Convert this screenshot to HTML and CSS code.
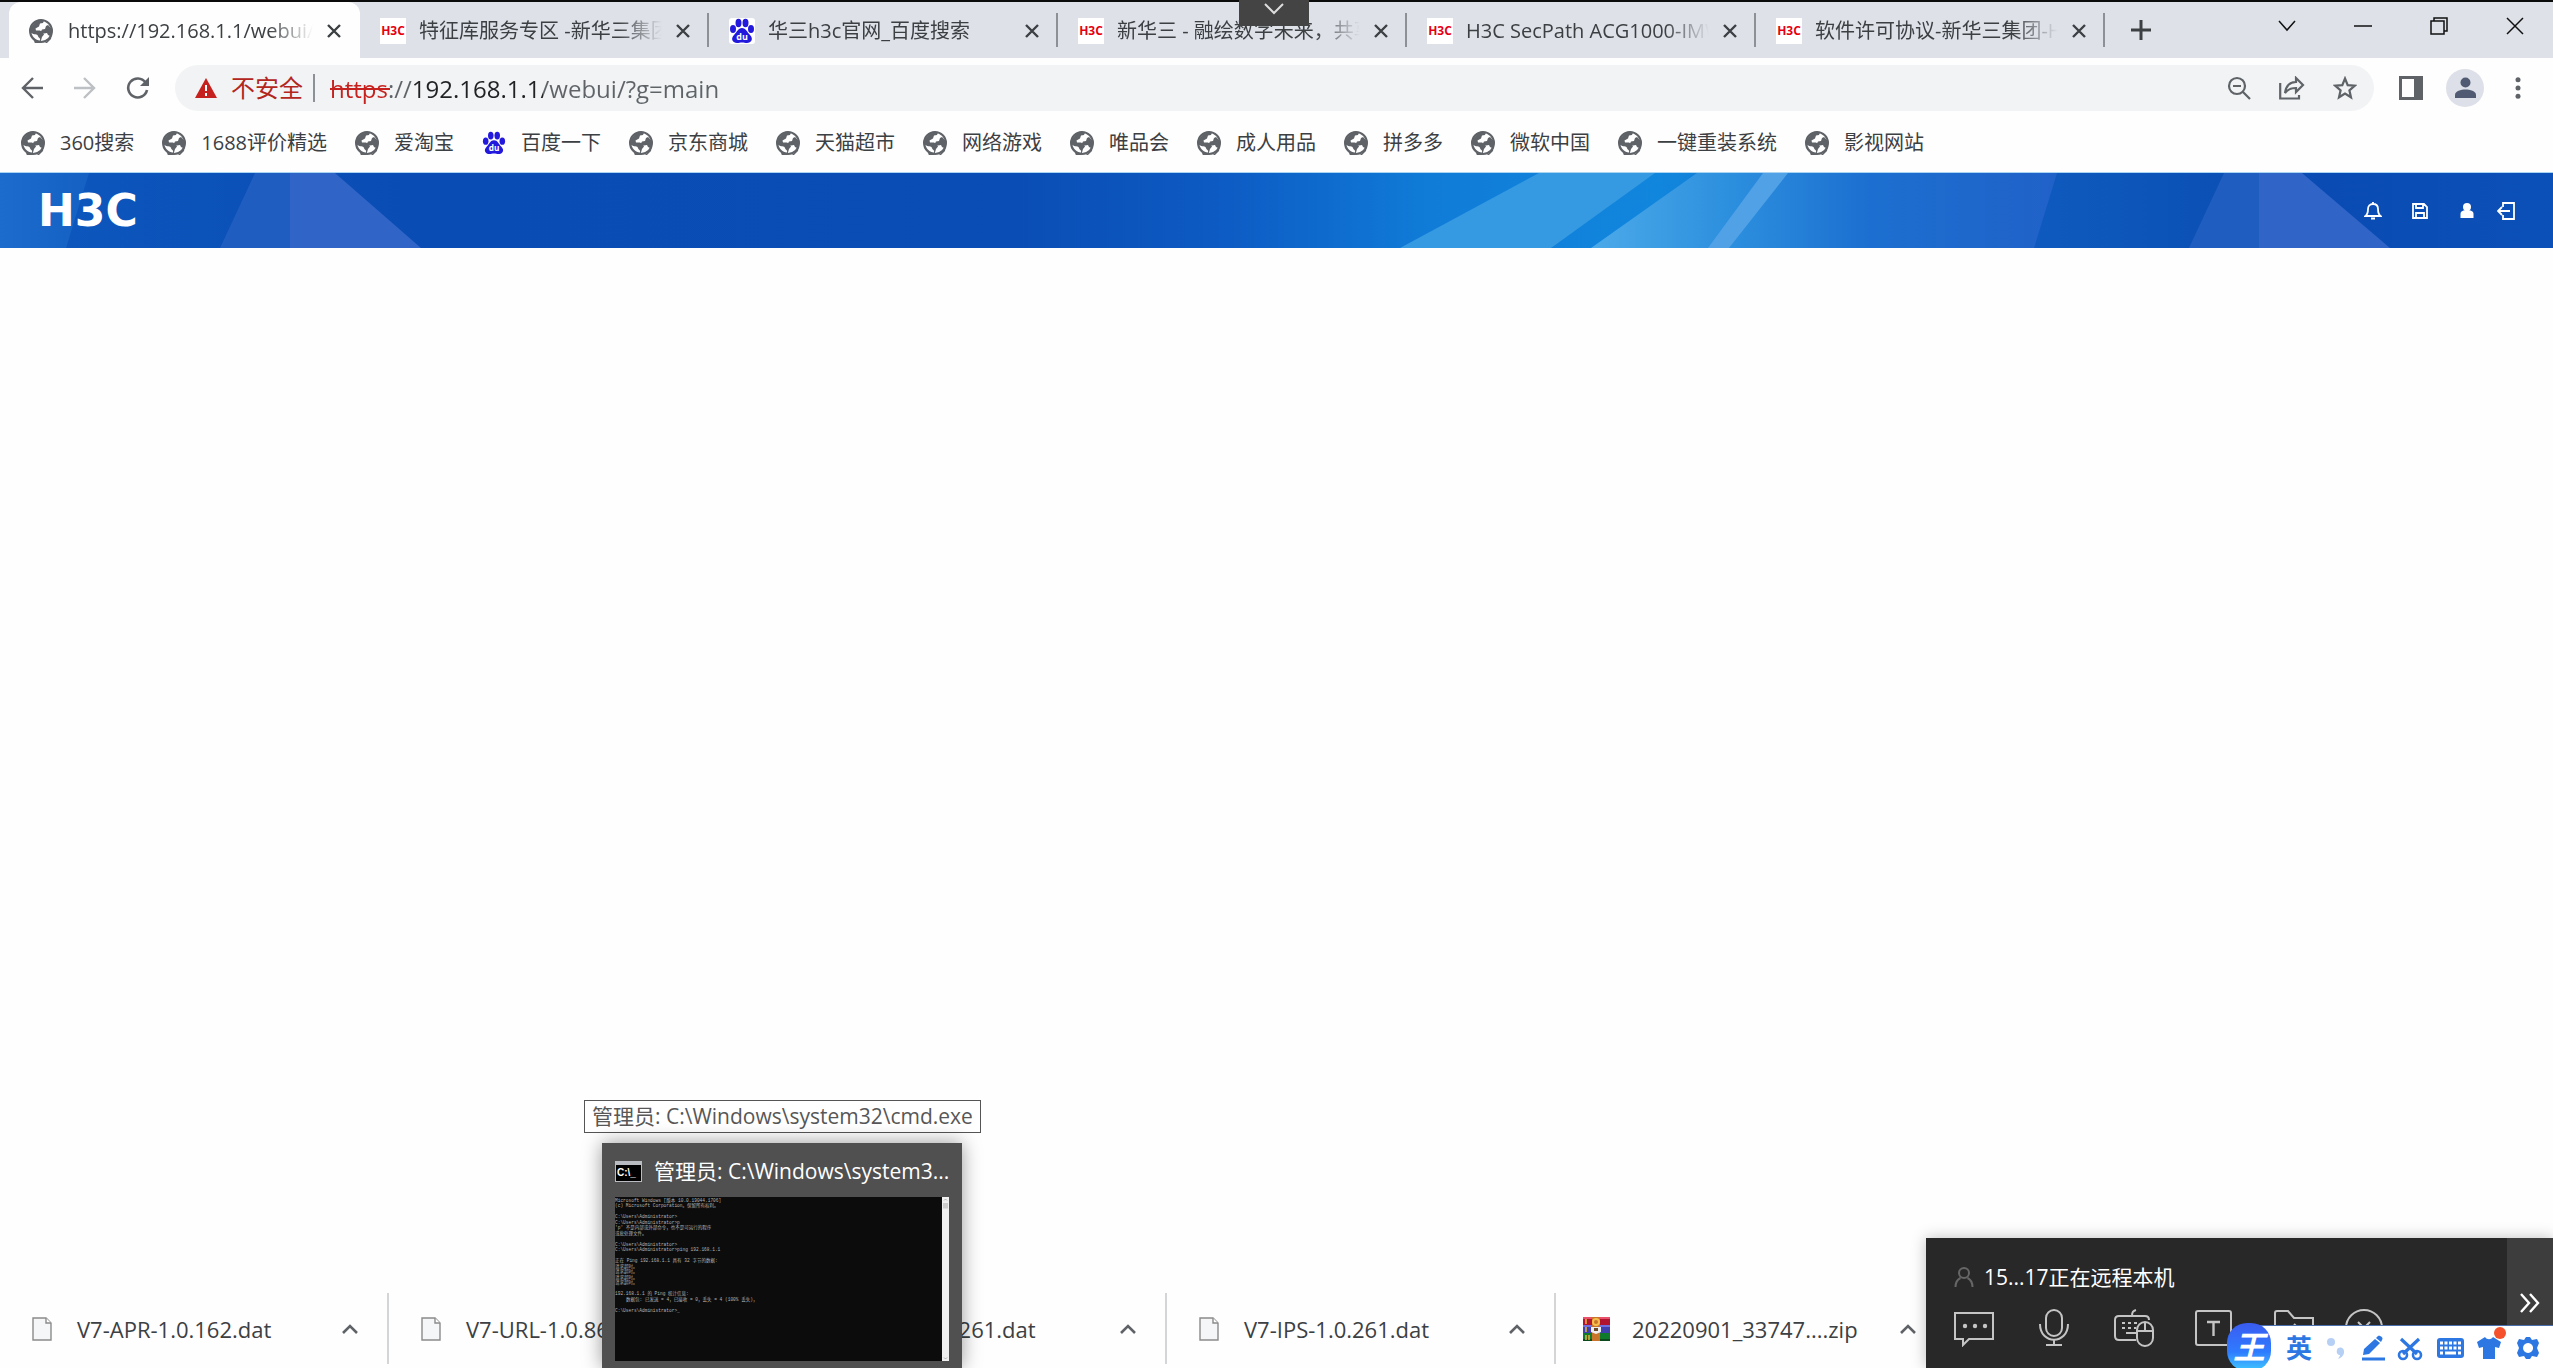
FILE: index.html
```html
<!DOCTYPE html>
<html lang="zh-CN">
<head>
<meta charset="utf-8">
<title>H3C</title>
<link rel="stylesheet" href="styles.css">
</head>
<body>
<svg class="sprite" aria-hidden="true">
  <symbol id="globe" viewBox="0 0 24 24">
    <circle cx="12" cy="12" r="11" fill="#fff" stroke="#5f6368" stroke-width="2"/>
    <path fill="#5f6368" d="M12 1C6 1 1 6 1 12l1 2 4 .5 3 2 1 2.500 1 3.500-1 .5-4-2-4-5V8l5-6zM1 11C1 5 6 .5 12 .5l3 1-1 2.500-3 .5-1 3-3.500 2 .5 2h4l3 2 1 2-2 2.500-1 3.500-1 3.500 5-1 4-4 1-3-2-1-1-2-3 .5-3-2 1-2 3-.5 1-3 2-1 3 3 1 5-1 6-5 5-5 1.500-6-2z"/>
    <path fill="#fff" d="M2.500 14c2 2 6 .5 6.500 3 .5 2 2.500 1.500 2 4.500C6.500 21 3.500 18 2.500 14z"/>
  </symbol>
  <symbol id="paw" viewBox="0 0 26 26">
    <g fill="#2319dc"><ellipse cx="4" cy="11" rx="3" ry="4"/><ellipse cx="9.500" cy="5" rx="3" ry="4.200"/><ellipse cx="16.500" cy="5" rx="3" ry="4.200"/><ellipse cx="22" cy="11" rx="3" ry="4"/>
    <path d="M13 10c4 0 5 4 8 7 4 4 1 8-3 8-2 0-3-.5-5-.5S10 25 8 25c-4 0-7-4-3-8 3-3 4-7 8-7z"/></g>
    <text x="13" y="22" text-anchor="middle" class="paw-text">du</text>
  </symbol>
  <symbol id="close" viewBox="0 0 14 14"><path d="M1 1l12 12M13 1L1 13" stroke="#3c4043" stroke-width="2.400" fill="none"/></symbol>
  <symbol id="file" viewBox="0 0 20 24"><path d="M1 1h13l5 5v17H1z" fill="#f5f6f8" stroke="#8a8a8a" stroke-width="1.400"/><path d="M14 1v5h5" fill="#fff" stroke="#8a8a8a" stroke-width="1.400"/></symbol>
  <symbol id="caret" viewBox="0 0 16 12"><path d="M1 10l7-7 7 7" fill="none" stroke="#5f6368" stroke-width="2.600"/></symbol>
</svg>

<header class="browser">
  <div class="tab-strip">
    <div class="tab tab-active">
      <svg class="fav"><use href="#globe"/></svg><span class="tab-title">https://192.168.1.1/webui/</span>
      <button class="tab-close" aria-label="关闭"><svg><use href="#close"/></svg></button>
    </div>
    <div class="tab"><span class="fav fav-h3c">H3C</span><span class="tab-title">特征库服务专区 -新华三集团</span><button class="tab-close" aria-label="关闭"><svg><use href="#close"/></svg></button></div>
    <div class="tab"><svg class="fav fav-paw"><use href="#paw"/></svg><span class="tab-title">华三h3c官网_百度搜索</span><button class="tab-close" aria-label="关闭"><svg><use href="#close"/></svg></button></div>
    <div class="tab"><span class="fav fav-h3c">H3C</span><span class="tab-title">新华三 - 融绘数字未来，共享</span><button class="tab-close" aria-label="关闭"><svg><use href="#close"/></svg></button></div>
    <div class="tab"><span class="fav fav-h3c">H3C</span><span class="tab-title">H3C SecPath ACG1000-IMW</span><button class="tab-close" aria-label="关闭"><svg><use href="#close"/></svg></button></div>
    <div class="tab"><span class="fav fav-h3c">H3C</span><span class="tab-title">软件许可协议-新华三集团-H3</span><button class="tab-close" aria-label="关闭"><svg><use href="#close"/></svg></button></div>
    <button class="new-tab" aria-label="新标签页"><svg width="20" height="20" viewBox="0 0 20 20"><path d="M10 0v20M0 10h20" stroke="#3c4043" stroke-width="3"/></svg></button>
    <div class="window-controls">
      <button aria-label="搜索标签页"><svg width="18" height="18" viewBox="0 0 18 18"><path d="M1 4l8 9 8-9"/></svg></button>
      <button aria-label="最小化"><svg width="18" height="18" viewBox="0 0 18 18"><path d="M0 9h18"/></svg></button>
      <button aria-label="还原"><svg width="18" height="18" viewBox="0 0 18 18"><path d="M1 4h13v13H1zM4 4V1h13v13h-3"/></svg></button>
      <button aria-label="关闭"><svg width="18" height="18" viewBox="0 0 18 18"><path d="M1 1l16 16M17 1L1 17"/></svg></button>
    </div>
  </div>

  <div class="toolbar">
    <button class="nav" aria-label="后退"><svg width="22" height="22" viewBox="0 0 22 22"><path d="M22 11H2M12 1L2 11l10 10" fill="none" stroke="#5f6368" stroke-width="2.400"/></svg></button>
    <button class="nav" aria-label="前进"><svg width="22" height="22" viewBox="0 0 22 22"><path d="M0 11h20M10 1l10 10-10 10" fill="none" stroke="#bdc0c4" stroke-width="2.400"/></svg></button>
    <button class="nav" aria-label="重新加载"><svg width="24" height="24" viewBox="0 0 24 24"><path d="M19.500 6.500A9.500 9.500 0 1 0 21 14" fill="none" stroke="#5f6368" stroke-width="2.600"/><path d="M23 1v9h-9z" fill="#5f6368"/></svg></button>
    <div class="omnibox">
      <svg width="22" height="20" viewBox="0 0 22 20"><path d="M11 0l11 20H0z" fill="#c5221f"/><path d="M11 7v6M11 15v3" stroke="#fff" stroke-width="2"/></svg>
      <label class="insecure" for="url">不安全</label>
      <span class="url-wrap"><input id="url" class="url" value="https://192.168.1.1/webui/?g=main" spellcheck="false"></span>
      <div class="omni-actions">
        <button aria-label="缩放"><svg width="24" height="24" viewBox="0 0 24 24"><circle cx="10" cy="10" r="8"/><path d="M6 10h8M16 16l7 7"/></svg></button>
        <button aria-label="分享"><svg width="26" height="24" viewBox="0 0 26 24"><path d="M1.200 7v15.500H20V19M6 17C7 10 10 6 17 6V2l7 7-7 7v-4c-5 0-8 1-11 5z"/></svg></button>
        <button aria-label="收藏"><svg width="24" height="24" viewBox="0 0 24 24"><path d="M12 2.500l2.700 6.600 7 .6-5.300 4.600 1.600 7L12 17.500 6 21.300l1.600-7L2.300 9.700l7-.6z"/></svg></button>
      </div>
    </div>
    <button class="side" aria-label="侧边栏"><svg width="24" height="24" viewBox="0 0 24 24"><path d="M0 0h24v24H0zM3 3v18h12V3z" fill="#5f6368" fill-rule="evenodd"/></svg></button>
    <button class="avatar" aria-label="用户"><svg width="21" height="22" viewBox="0 0 21 22"><circle cx="10.500" cy="5.500" r="5" fill="#505a72"/><path d="M0 21v-3c0-4 6-5.500 10.500-5.500S21 14 21 18v3z" fill="#505a72"/></svg></button>
    <button class="more" aria-label="更多"><svg width="6" height="22" viewBox="0 0 6 22"><g fill="#5f6368"><circle cx="3" cy="2.700" r="2.500"/><circle cx="3" cy="11" r="2.500"/><circle cx="3" cy="19.300" r="2.500"/></g></svg></button>
  </div>

  <nav class="bookmarks">
    <a href="#"><svg><use href="#globe"/></svg>360搜索</a>
    <a href="#"><svg><use href="#globe"/></svg>1688评价精选</a>
    <a href="#"><svg><use href="#globe"/></svg>爱淘宝</a>
    <a href="#"><svg><use href="#paw"/></svg>百度一下</a>
    <a href="#"><svg><use href="#globe"/></svg>京东商城</a>
    <a href="#"><svg><use href="#globe"/></svg>天猫超市</a>
    <a href="#"><svg><use href="#globe"/></svg>网络游戏</a>
    <a href="#"><svg><use href="#globe"/></svg>唯品会</a>
    <a href="#"><svg><use href="#globe"/></svg>成人用品</a>
    <a href="#"><svg><use href="#globe"/></svg>拼多多</a>
    <a href="#"><svg><use href="#globe"/></svg>微软中国</a>
    <a href="#"><svg><use href="#globe"/></svg>一键重装系统</a>
    <a href="#"><svg><use href="#globe"/></svg>影视网站</a>
  </nav>
</header>

<div class="banner">
  <svg class="banner-art" viewBox="0 0 2553 75" preserveAspectRatio="none" aria-hidden="true">
    <defs>
      <linearGradient id="base"><stop offset="0" stop-color="#0d58be"/><stop offset=".16" stop-color="#094cb4"/><stop offset=".4" stop-color="#0a4eb5"/><stop offset=".48" stop-color="#0d5bc4"/><stop offset=".56" stop-color="#107cd8"/><stop offset=".65" stop-color="#1186dd"/><stop offset=".78" stop-color="#0f5cc0"/><stop offset=".86" stop-color="#0c52b6"/><stop offset=".91" stop-color="#094bb3"/><stop offset="1" stop-color="#0b50b8"/></linearGradient>
      <linearGradient id="glow"><stop offset="0" stop-color="#4caae9"/><stop offset=".3" stop-color="#2c8fde"/><stop offset=".6" stop-color="#1c6fd0"/><stop offset="1" stop-color="#2061c8"/></linearGradient>
      <linearGradient id="edge"><stop offset="0" stop-color="#1c6ccd"/><stop offset="1" stop-color="#1460c3"/></linearGradient>
    </defs>
    <path d="M0 0h2553v75H0z" fill="url(#base)"/>
    <path d="M0 0h89L66 75H0z" fill="url(#edge)"/>
    <path d="M255 0h35v75h-70z" fill="#205dc0"/><path d="M290 0h45l86 75H290z" fill="#3064c7"/>
    <path d="M1539 0h116l-104 75h-151z" fill="#359ae2"/>
    <path d="M1697 0h360l-23 75h-443z" fill="url(#glow)"/>
    <path d="M1763 0h25l-59 75h-21z" fill="#51a1e7"/>
    <path d="M2224 0h35v75h-70z" fill="#205dc0"/><path d="M2259 0h43l88 75h-131z" fill="#3064c7"/>
  </svg>
  <span class="logo">H3C</span>
  <div class="banner-actions">
    <button aria-label="通知"><svg width="18" height="18" viewBox="0 0 18 18"><path d="M1.500 14C4 12 4 10 4 7c0-3 2-5 5-5s5 2 5 5 0 5 2.500 7zM9 0v2M7 16.500h4" fill="none" stroke="#fff" stroke-width="1.800"/></svg></button>
    <button aria-label="保存"><svg width="18" height="18" viewBox="0 0 18 18"><path d="M2 2h11l3 3v11H2zM5 2v4h7V2M5 16v-5h8v5" fill="none" stroke="#fff" stroke-width="1.800"/></svg></button>
    <button aria-label="用户"><svg width="18" height="18" viewBox="0 0 18 18"><circle cx="9" cy="5" r="4" fill="#fff"/><path d="M2.500 16V12c0-3 3-4 6.500-4s6.500 1 6.500 4v4z" fill="#fff"/></svg></button>
    <button class="logout" aria-label="退出"><svg width="18" height="18" viewBox="0 0 18 18"><path d="M6 5V1h11v16H6v-4M13 9H1M5 5L1 9l4 4" fill="none" stroke="#fff" stroke-width="1.800"/></svg></button>
  </div>
</div>

<main class="page"></main>

<footer class="downloads">
  <div class="download"><svg class="doc"><use href="#file"/></svg><span>V7-APR-1.0.162.dat</span><button aria-label="选项"><svg><use href="#caret"/></svg></button></div>
  <div class="download"><svg class="doc"><use href="#file"/></svg><span>V7-URL-1.0.86.dat</span><button aria-label="选项"><svg><use href="#caret"/></svg></button></div>
  <div class="download"><svg class="doc"><use href="#file"/></svg><span>V7-AV-1.0.261.dat</span><button aria-label="选项"><svg><use href="#caret"/></svg></button></div>
  <div class="download"><svg class="doc"><use href="#file"/></svg><span>V7-IPS-1.0.261.dat</span><button aria-label="选项"><svg><use href="#caret"/></svg></button></div>
  <div class="download download-zip">
    <svg class="doc" viewBox="0 0 27 24"><path d="M0 0h27v8H0z" fill="#b0142e"/><path d="M0 0h27v2H0z" fill="#e8506c"/><path d="M0 8h27v8H0z" fill="#3f3fae"/><path d="M0 8h27v2H0z" fill="#6f6fe0"/><path d="M0 16h27v8H0z" fill="#0f7a2c"/><path d="M0 22h27v2H0z" fill="#0a4a1c"/><path d="M3 2v5M3 10v5M3 18v5M6 18v5" stroke="#e8b43c" stroke-width="1.500"/><path d="M9 0h8v24H9z" fill="#c8742a"/><circle cx="13" cy="5" r="3" fill="none" stroke="#f6c04c" stroke-width="2"/><path d="M8 10h10v5l-5 2-5-2z" fill="#eee"/><path d="M11 11h4v3h-4z" fill="#6b4a2a"/></svg>
    <span>20220901_33747....zip</span><button aria-label="选项"><svg><use href="#caret"/></svg></button>
  </div>
</footer>

<button class="pull-down" aria-label="展开"><svg width="20" height="12" viewBox="0 0 20 12"><path d="M1 1l9 9 9-9" fill="none" stroke="#ddd" stroke-width="2"/></svg></button>

<div class="tooltip" role="tooltip">管理员: C:\Windows\system32\cmd.exe</div>

<section class="preview">
  <div class="preview-head">
    <svg width="27" height="21" viewBox="0 0 27 21"><path d="M0 0h27v21H0z" fill="#b8bcc0"/><path d="M1 4h25v16H1z" fill="#000"/><text x="2" y="15" class="cmd-glyph">C:\_</text></svg>
    <span>管理员: C:\Windows\system3...</span>
  </div>
  <svg class="console" viewBox="0 0 668 328">
    <path d="M0 0h654v328H0z" fill="#0c0c0c"/><path d="M654 0h14v328h-14z" fill="#f0f0f0"/><path d="M656 12h10v11h-10z" fill="#cdcdcd"/><path d="M658 7l3-3 3 3M658 321l3 3 3-3" stroke="#777" fill="none"/>
    <g class="console-text">
      <text x="0" y="9">Microsoft Windows [版本 10.0.19044.1706]</text>
      <text x="0" y="20">(c) Microsoft Corporation。保留所有权利。</text>
      <text x="0" y="42">C:\Users\Administrator&gt;</text>
      <text x="0" y="53">C:\Users\Administrator&gt;p</text>
      <text x="0" y="64">'p' 不是内部或外部命令，也不是可运行的程序</text>
      <text x="0" y="75">或批处理文件。</text>
      <text x="0" y="97">C:\Users\Administrator&gt;</text>
      <text x="0" y="108">C:\Users\Administrator&gt;ping 192.168.1.1</text>
      <text x="0" y="130">正在 Ping 192.168.1.1 具有 32 字节的数据:</text>
      <text x="0" y="141">请求超时。</text>
      <text x="0" y="152">请求超时。</text>
      <text x="0" y="163">请求超时。</text>
      <text x="0" y="174">请求超时。</text>
      <text x="0" y="196">192.168.1.1 的 Ping 统计信息:</text>
      <text x="22" y="207">数据包: 已发送 = 4，已接收 = 0，丢失 = 4 (100% 丢失)，</text>
      <text x="0" y="229">C:\Users\Administrator&gt;_</text>
    </g>
  </svg>
</section>

<aside class="remote">
  <div class="remote-body">
    <div class="remote-title"><svg width="20" height="20" viewBox="0 0 20 20"><circle cx="10" cy="6" r="5"/><path d="M1.500 20c0-6 3-8 5-9M18.500 20c0-6-3-8-5-9"/></svg>15...17正在远程本机</div>
    <div class="remote-tools">
      <button aria-label="聊天"><svg width="40" height="38" viewBox="0 0 40 38"><path d="M1 4h38v26H15l-6 6v-6H1z"/><g class="dot"><circle cx="11" cy="17" r="2.200"/><circle cx="21" cy="17" r="2.200"/><circle cx="31" cy="17" r="2.200"/></g></svg></button>
      <button aria-label="语音"><svg width="40" height="38" viewBox="0 0 40 38"><rect x="12" y="1" width="16" height="26" rx="8"/><path d="M6 15c0 21 28 21 28 0M20 31v5M12 36h16"/></svg></button>
      <button aria-label="键鼠"><svg width="40" height="38" viewBox="0 0 40 38"><path d="M22 31H5c-3 0-4-1-4-4V11c0-3 1-4 4-4h26c3 0 4 1 4 4M18 7c0-4 1-5 4-6M12 24h10"/><path d="M8 14h16M8 19h14" stroke-dasharray="3 3"/><rect x="23" y="13" width="16" height="24" rx="8" fill="#282828"/><path d="M23 22h16M31 13v9"/></svg></button>
      <button aria-label="文本"><svg width="40" height="38" viewBox="0 0 40 38"><rect x="2" y="2" width="35" height="34" rx="2"/><path d="M13 13h13M19.500 13v14" stroke-width="2.400"/></svg></button>
      <button aria-label="文件"><svg width="40" height="38" viewBox="0 0 40 38"><path d="M1 36V4c0-2 1-2 2-2h11l6 7h19v27zM20 15l6 6"/></svg></button>
      <button class="end" aria-label="结束"><svg width="40" height="38" viewBox="0 0 40 38"><circle cx="20" cy="19" r="18"/><path d="M14 13l12 12M26 13L14 25"/></svg></button>
    </div>
  </div>
  <button class="remote-collapse" aria-label="收起"><svg width="22" height="20" viewBox="0 0 22 20"><path d="M2 1l8 9-8 9M11 1l8 9-8 9" fill="none" stroke="#fff" stroke-width="2.400"/></svg></button>
</aside>

<div class="ime">
  <button class="ime-logo">王</button>
  <button class="ime-lang">英</button>
  <button aria-label="标点"><svg width="24" height="26" viewBox="0 0 24 26"><circle cx="6" cy="7" r="4" fill="#b6d0f5"/><path d="M12 15c1-4 8-3 7 3-.5 3-3 5-6 6 1-2 2-3 2-4-2 0-4-2-3-5z" fill="#b6d0f5"/></svg></button>
  <button aria-label="手写"><svg width="24" height="26" viewBox="0 0 24 26"><path d="M2 20l1-6L14 4l5 4L8 19zM15 3l2-2c2-1 6 2 4 4l-1 2z" fill="#2c77e2"/><path d="M1 24h23" stroke="#2c77e2" stroke-width="3"/></svg></button>
  <button aria-label="截图"><svg width="26" height="26" viewBox="0 0 26 26"><path d="M4 4l16 15M22 4L6 19" stroke="#2c77e2" stroke-width="3.200"/><g fill="none" stroke="#2c77e2" stroke-width="2.600"><circle cx="6" cy="20" r="4"/><circle cx="20" cy="20" r="4"/></g></svg></button>
  <button aria-label="键盘"><svg width="28" height="26" viewBox="0 0 28 26"><rect x="1" y="3" width="27" height="20" rx="3" fill="#2c77e2"/><path d="M4 8h21M4 13h21" stroke="#fff" stroke-width="3" stroke-dasharray="3 1.500"/><path d="M4 18h3M9 18h11M22 18h3" stroke="#fff" stroke-width="3"/></svg></button>
  <button class="ime-skin" aria-label="皮肤"><svg width="26" height="26" viewBox="0 0 26 26"><path d="M1 7l8-5c2 3 6 3 8 0l8 5-2 6-4-1v12H7V12l-4 1z" fill="#2c77e2"/></svg></button>
  <button aria-label="设置"><svg width="26" height="26" viewBox="0 0 26 26"><path d="M11 2h4l2 3 5-1 2 4-2 5 2 5-2 4-5-1-2 3h-4l-2-3-5 1-2-4 2-5-2-5 2-4 5 1zM13 8a5 5 0 1 0 .1 0z" fill="#2c77e2" fill-rule="evenodd"/></svg></button>
</div>
</body>
</html>
```
FILE: styles.css
```css
* { box-sizing: border-box; }
body {
  margin: 0;
  min-height: 100vh;
  display: flex;
  flex-direction: column;
  position: relative;
  overflow: hidden;
  background: #fefefe;
  color: #3c4043;
  font: 20px/28px "Open Sans", "Noto Sans CJK SC", sans-serif;
}
button { border: 0; padding: 0; background: none; font: inherit; color: inherit; display: flex; align-items: center; justify-content: center; }
svg { display: block; flex: none; }
.sprite { position: absolute; width: 0; height: 0; }

.tab-strip { display: flex; height: 58px; border-top: 2px solid #0b0b0b; background: #dee1e8; padding-left: 9px; }
.tab { position: relative; flex: 0 1 349px; min-width: 0; display: flex; align-items: center; padding: 2px 13px 0 20px; }
.tab:not(.tab-active)::after { content: ""; position: absolute; right: 0; top: 11px; width: 2px; height: 34px; background: #8d9095; }
.tab-active { flex-basis: 351px; background: #fefefe; border-radius: 12px 12px 0 0; }
.fav { width: 26px; height: 26px; margin-right: 13px; flex: none; }
.tab-active .fav { width: 24px; height: 24px; margin-right: 15px; }
.fav-h3c { background: #fff; color: #e60012; font: bold 12px/26px "Open Sans", sans-serif; text-align: center; }
.fav-paw { background: #fff; border-radius: 3px; }
.paw-text { font: bold 9px "Open Sans", sans-serif; fill: #fff; }
.tab-title { flex: 1; overflow: hidden; white-space: nowrap; mask-image: linear-gradient(to right, #000 82%, transparent); }
.tab-close { width: 26px; height: 26px; margin-left: 8px; }
.tab-close svg { width: 14px; height: 14px; }
.new-tab { width: 72px; }
.window-controls { display: flex; margin-left: auto; height: 48px; }
.window-controls button { width: 76px; }
.window-controls svg { fill: none; stroke: #111; stroke-width: 1.5; }

.toolbar { display: flex; align-items: center; height: 60px; padding: 0 32px 0 20px; }
.nav { width: 24px; height: 32px; margin-right: 29px; }
.nav:nth-child(3) { margin-right: 25px; }
.omnibox { flex: 1; display: flex; align-items: center; height: 46px; padding: 0 17px 0 20px; border-radius: 23px; background: #f1f3f4; font-size: 24px; }
.insecure { color: #b3261e; margin-left: 14px; padding-right: 10px; border-right: 2px solid #8d9095; white-space: nowrap; }
.url-wrap { position: relative; flex: 1; margin-left: 15px; }
.url-wrap::before { content: ""; position: absolute; left: 0; top: 16px; width: 60px; height: 2px; background: #c5221f; }
.url {
  display: block; width: 100%; height: 32px; border: 0; padding: 0; outline: 0; font: inherit;
  background: linear-gradient(to right, #c5221f 60px, #5f6368 60px 83px, #202124 83px 213px, #5f6368 213px);
  background-clip: text;
  -webkit-text-fill-color: transparent;
}
.omni-actions { display: flex; gap: 28px; }
.omni-actions svg { fill: none; stroke: #5f6368; stroke-width: 2.2; }
.side { margin-left: 25px; }
.avatar { width: 38px; height: 38px; margin-left: 23px; border-radius: 19px; background: #dde0e8; }
.more { margin-left: 31px; }

.bookmarks { display: flex; align-items: center; gap: 28px; height: 54px; padding: 0 21px 4px; }
.bookmarks a { display: flex; align-items: center; gap: 15px; color: inherit; text-decoration: none; white-space: nowrap; }
.bookmarks svg { width: 24px; height: 24px; }

.banner { position: relative; display: flex; align-items: center; height: 76px; padding: 0 38px; border-top: 1px solid #a9d4f2; background: #0a4eb5; }
.banner-art { position: absolute; inset: 0; width: 100%; height: 75px; }
.logo { position: relative; color: #fff; font: bold 44px/48px "DejaVu Sans", sans-serif; }
.banner-actions { position: relative; margin-left: auto; display: flex; gap: 29px; }
.logout { margin-left: -8px; }

.page { flex: 1; }

.downloads { display: flex; height: 75px; padding-bottom: 4px; font-size: 22px; }
.download { flex: 0 0 389px; display: flex; align-items: center; padding: 0 29px 0 32px; border-right: 2px solid #d3d5d7; }
.download-zip { padding-left: 27px; border: 0; }
.doc { width: 20px; height: 24px; margin-right: 25px; }
.download-zip .doc { width: 27px; margin-right: 22px; }
.download span { flex: 1; white-space: nowrap; }
.download button svg { width: 16px; height: 12px; }

.pull-down { position: absolute; left: calc(50% - 38px); top: 0; width: 70px; height: 26px; padding-bottom: 8px; background: #444; }
.tooltip { position: absolute; left: 584px; bottom: 235px; height: 33px; padding: 0 7px; border: 1px solid #555; background: #fff; color: #575757; font-size: 21px; line-height: 31px; white-space: nowrap; }
.preview { position: absolute; left: 602px; bottom: 0; width: 360px; height: 225px; padding: 14px 13px 0; background: #505051; box-shadow: 0 0 18px rgba(0, 0, 0, .4); color: #fff; font-size: 21px; }
.preview-head { display: flex; align-items: center; gap: 12px; height: 28px; margin-bottom: 12px; white-space: nowrap; }
.cmd-glyph { font: bold 10px "Liberation Sans", sans-serif; fill: #fff; }
.console { width: 334px; height: 164px; }
.console-text { font: 9px "Liberation Mono", "Noto Sans CJK SC", monospace; fill: #b5b5b5; }

.remote { position: absolute; right: 0; bottom: 0; width: 627px; height: 130px; display: flex; background: #282828; box-shadow: 0 0 14px rgba(0, 0, 0, .25); color: #fff; }
.remote-body { flex: 1; padding: 24px 0 0 28px; }
.remote-title { display: flex; align-items: center; gap: 10px; height: 30px; font-size: 21px; }
.remote-title svg { fill: none; stroke: #666; stroke-width: 2; }
.remote-tools { display: flex; gap: 40px; margin-top: 17px; }
.remote-tools svg { fill: none; stroke: #c4c4c4; stroke-width: 2; }
.remote-tools .dot { fill: #c4c4c4; stroke: none; }
.remote-tools .end { margin-left: -10px; }
.remote-collapse { width: 46px; padding-bottom: 0; background: #3d3d3d; }

.ime { position: absolute; right: 0; bottom: 0; width: 303px; height: 43px; display: flex; align-items: center; justify-content: space-between; padding: 2px 12px 0 36px; border-top: 1px solid #4a6fae; background: #fff; }
.ime-logo { position: absolute; left: -23px; top: -3px; width: 44px; height: 48px; border-radius: 20px; background: linear-gradient(#3a5cf0, #2f7bff 60%, #3fc8ff); color: #fff; font-size: 32px; font-style: italic; font-weight: bold; }
.ime-lang { color: #2c77e2; font-size: 26px; font-weight: bold; }
.ime-skin { position: relative; }
.ime-skin::after { content: ""; position: absolute; right: -4px; top: -8px; width: 12px; height: 12px; border-radius: 6px; background: #f4512c; }
```
